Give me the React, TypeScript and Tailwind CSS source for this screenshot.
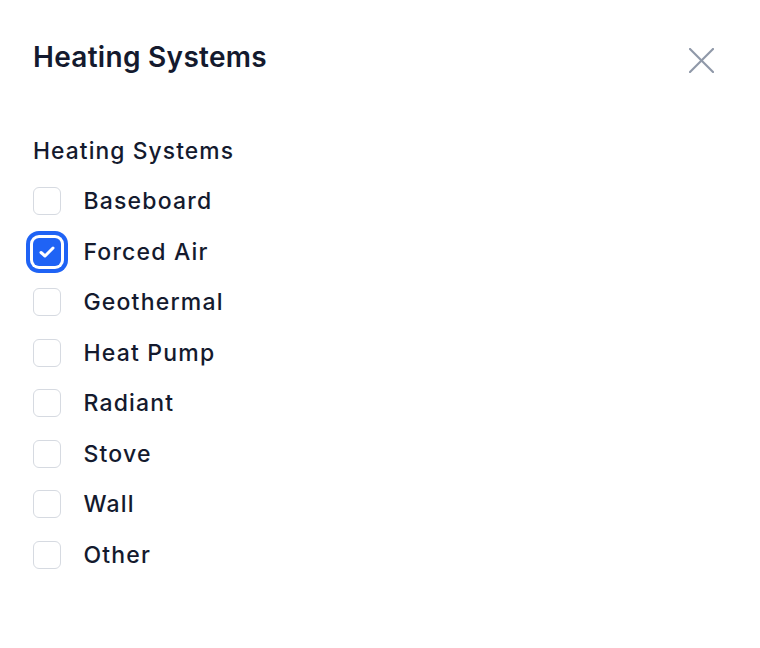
import React from "react";

const items = [
  { label: "Baseboard", checked: false },
  { label: "Forced Air", checked: true },
  { label: "Geothermal", checked: false },
  { label: "Heat Pump", checked: false },
  { label: "Radiant", checked: false },
  { label: "Stove", checked: false },
  { label: "Wall", checked: false },
  { label: "Other", checked: false },
];

export default function App() {
  return (
    <div
      className="w-[760px] h-[648px] bg-white text-[#141a2e]"
      style={{ fontFamily: "Inter, 'Noto Sans', sans-serif" }}
    >
      <div className="flex items-start justify-between pl-[33px] pr-[46px] pt-[39px]">
        <h1 className="text-[28px] leading-[36px] font-semibold tracking-[0.3px]">Heating Systems</h1>
        <button className="mt-[9px] w-[25px] h-[25px] text-[#8f98a8]" aria-label="Close">
          <svg width="25" height="25" viewBox="0 0 25 25" fill="none" stroke="currentColor" strokeWidth="2.2" strokeLinecap="round">
            <line x1="1" y1="1" x2="24" y2="24" />
            <line x1="24" y1="1" x2="1" y2="24" />
          </svg>
        </button>
      </div>
      <div className="pl-[33px] mt-[60px]">
        <div className="text-[22.8px] leading-[32px] font-medium tracking-[1.1px]">Heating Systems</div>
        <div className="mt-[9px] flex flex-col">
          {items.map((it) => (
            <label key={it.label} className="flex items-center h-[50.5px] gap-[22.4px]">
              {it.checked ? (
                <span className="w-[28px] h-[28px] rounded-[6px] bg-[#1f63f5] flex items-center justify-center ring-4 ring-[#1f63f5] ring-offset-[3px] ring-offset-white">
                  <svg width="28" height="28" viewBox="0 0 28 28" fill="none" stroke="white" strokeWidth="3" strokeLinecap="round" strokeLinejoin="round">
                    <path d="M8 14.5 L12 18 L20 10" />
                  </svg>
                </span>
              ) : (
                <span className="w-[28px] h-[28px] rounded-[6px] border border-[#d6dae1] bg-white" />
              )}
              <span className="text-[23px] leading-[32px] font-medium tracking-[1.2px]">{it.label}</span>
            </label>
          ))}
        </div>
      </div>
    </div>
  );
}
